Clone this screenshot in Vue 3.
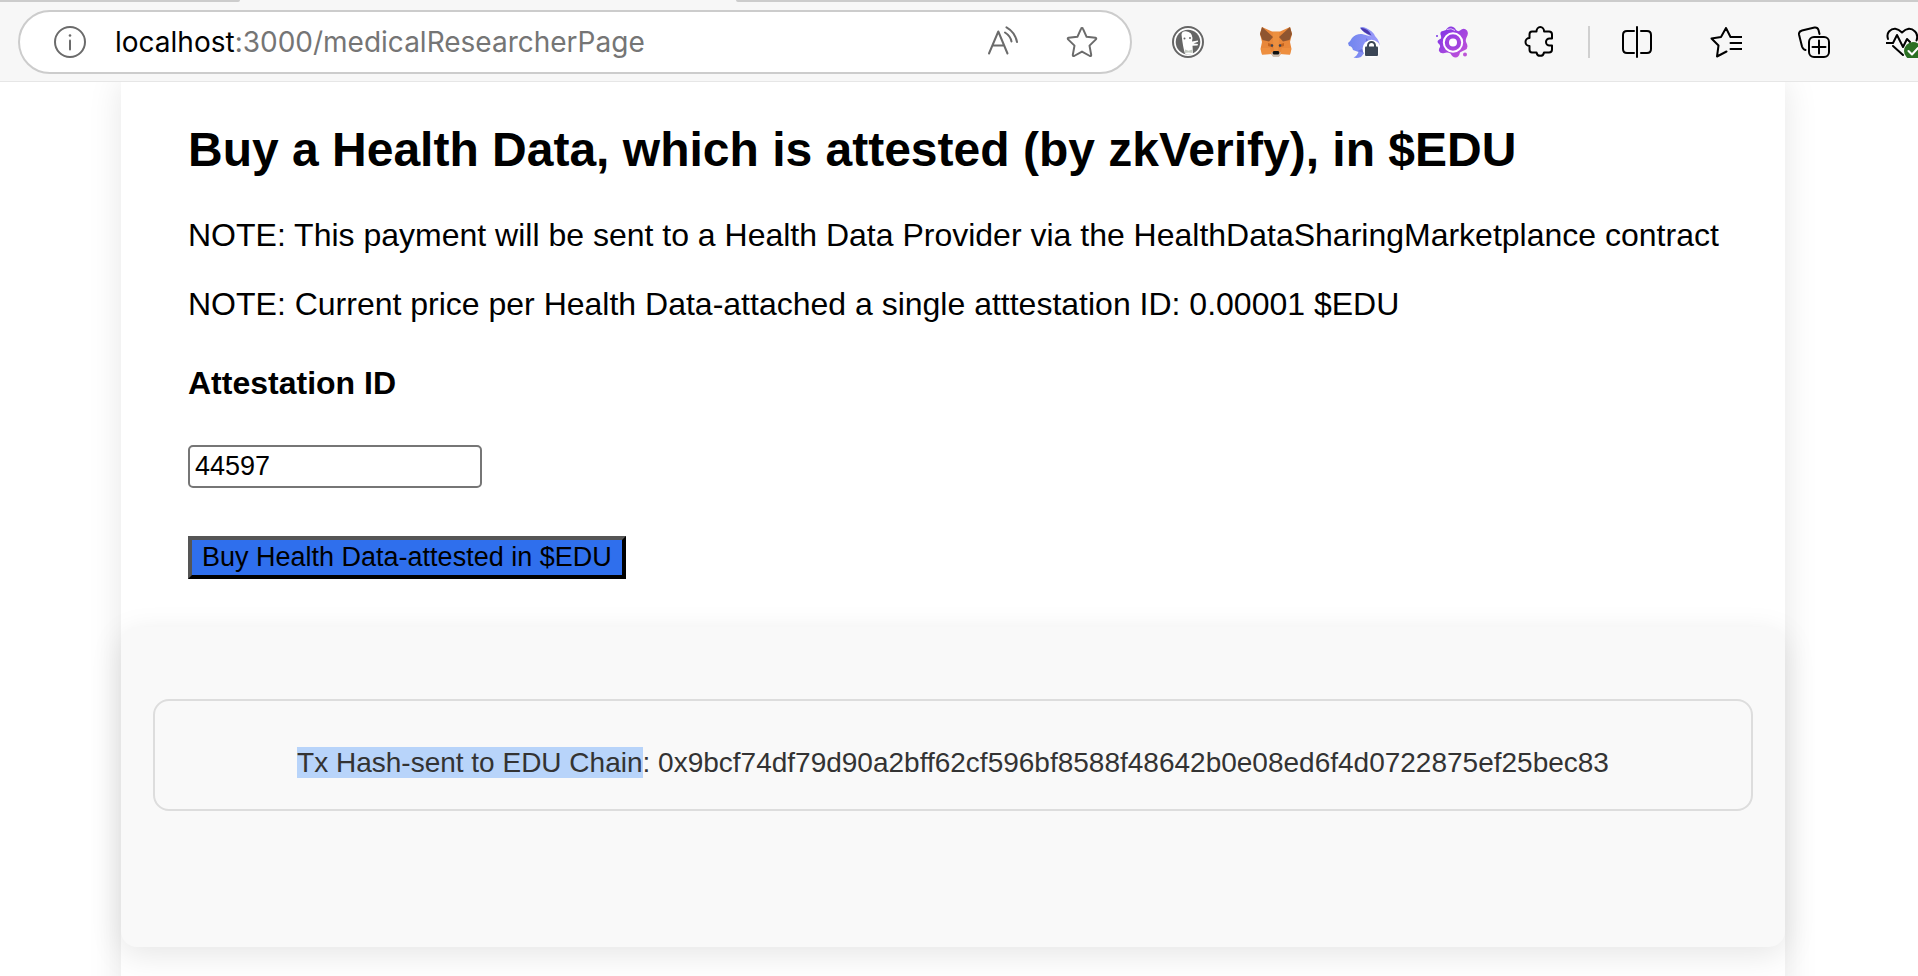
<script setup>
import { ref } from 'vue'

const attestationId = ref('44597')
const txHash = '0x9bcf74df79d90a2bff62cf596bf8588f48642b0e08ed6f4d0722875ef25bec83'
</script>

<template>
  <div class="browser">
    <header class="chrome">
      <div class="tab-strip">
        <span class="tabs-before"></span>
        <span class="tabs-after"></span>
      </div>
      <div class="toolbar">
        <div class="address-bar">
          <button class="icon-button" type="button" aria-label="Site information">
            <svg class="icon grey" viewBox="0 0 32 32">
              <circle cx="16" cy="16" r="15" />
              <path d="M16 14.5v9" />
              <circle cx="16" cy="9.5" r="1.3" class="dot" />
            </svg>
          </button>
          <div class="url" role="textbox" aria-label="Address"><span class="host">localhost</span>:3000/medicalResearcherPage</div>
          <button class="icon-button" type="button" aria-label="Read aloud">
            <svg class="icon grey" viewBox="0 0 32 32">
              <path d="M3 27.500L12.300 5.500L21.500 27.500M6.500 19.500H18" />
              <path d="M19 6.500Q24.500 10 25.500 15.500M20.500 1.300Q29 6 31 16" />
            </svg>
          </button>
          <button class="icon-button" type="button" aria-label="Add to favorites">
            <svg class="icon grey" viewBox="0 0 32 32">
              <path d="M16 2q.7 0 1 .8l3.600 8 8.800 1q1.400.4.500 1.600l-6.400 6.200 1.700 9.300q0 1.500-1.300 1.100L16 25.600 8.100 30q-1.300.4-1.300-1.100l1.700-9.300L2.100 13.400q-.9-1.200.5-1.600l8.800-1 3.600-8q.3-.8 1-.8z" />
            </svg>
          </button>
        </div>

        <div class="extensions">
          <button class="icon-button" type="button" aria-label="DuckDuckGo">
            <svg class="icon" viewBox="0 0 32 32">
              <circle cx="16" cy="16" r="15" fill="#fff" stroke="#666" stroke-width="2" />
              <circle cx="16" cy="16" r="12.300" fill="#666" />
              <path d="M9.500 8.500Q10 5 14 5.300q6 .7 6.500 6.700l-.5 3.500 6-1v1.200l-4.500 1.800 4.500.6-.5 1.400-5 .3.500 8q-3 1.200-8 0-2-6-3.500-19.300z" fill="#fff" />
              <circle cx="12.500" cy="12.500" r="1" fill="#666" />
              <circle cx="18" cy="12" r="1" fill="#666" />
              <path d="M13 23.500l3.500 1.200 4-1.200v3.500l-4-.5-3.500.5z" fill="#c6ccc3" />
            </svg>
          </button>
          <button class="icon-button" type="button" aria-label="MetaMask">
            <svg class="icon" viewBox="0 0 32 32">
              <path d="M2 1l10 4.500h8L30 1l2 7-2 8 1.500 7-1.500 5.500-9-.5-2.500 2.500h-5L11 28l-9 .5L.5 23 2 16 0 8z" fill="#e8873a" />
              <path d="M2 1l11 10-4 4.500-6.500-1.500L0 8zM30 1L19 11l4 4.500 6.500-1.500L32 8z" fill="#8f5530" />
              <path d="M13 6h6v8l-1 11h-4l-1-11z" fill="#ec9040" />
              <path d="M8 17l5 1.500v3L8 20zM24 17l-5 1.500v3l5-1.500z" fill="#c4641f" />
              <circle cx="12" cy="19.500" r="1.200" fill="#394556" />
              <circle cx="20" cy="19.500" r="1.200" fill="#394556" />
              <path d="M1 22h9l2 6-10 .5zM31 22h-9l-2 6 10 .5z" fill="#ee8f3f" />
              <path d="M11 26.500h10L19 31h-6z" fill="#cfc0b2" />
              <path d="M13.500 25h5l1 2-1 1.500h-5l-1-1.500z" fill="#111" />
            </svg>
          </button>
          <button class="icon-button" type="button" aria-label="Rabby Wallet">
            <svg class="icon" viewBox="0 0 32 32">
              <defs>
                <linearGradient id="rabby" x1="0" x2="1">
                  <stop offset="0" stop-color="#7085ee" />
                  <stop offset="1" stop-color="#9d9afa" />
                </linearGradient>
              </defs>
              <path d="M12 2q1.500-2 6 0 7 3 9 8 5 5 5 12l-4 4H17l-4 5q-4 1.500-7.500.5 3-1 5-5.500L5 24q-1-4-4-4l-1-3q2-1 4-5 4-4.500 10-4l9 2.500Q15 6.500 12 2z" fill="url(#rabby)" />
              <path d="M12.500 1.800q8 .5 11 7.700Q15 7 12.500 1.800z" fill="#4a38ac" />
              <path d="M10 25q9-3 8-13l6 6-8 9z" fill="#4c50c0" opacity=".45" />
              <circle cx="23.500" cy="22.800" r="9" fill="#fff" />
              <path d="M20 21v-1.500a3.500 3.500 0 0 1 7 0V21" fill="none" stroke="#3b4656" stroke-width="2" />
              <rect x="17" y="20.500" width="13" height="9.500" rx="1" fill="#3b4656" />
            </svg>
          </button>
          <button class="icon-button" type="button" aria-label="Wallet extension">
            <svg class="icon" viewBox="0 0 32 32">
              <defs>
                <linearGradient id="splash" x1="0" y1="0" x2="1" y2="1">
                  <stop offset="0" stop-color="#7a32e6" />
                  <stop offset="1" stop-color="#c856d8" />
                </linearGradient>
              </defs>
              <path d="M10 4Q12 0 15.500.500 19 1 20 4q2 2 4 .5Q28 1 31 4.500q2 3-.5 7-1.500 3 0 5.500 2.500 5-1.500 7-3 1-5 2.500-1 5-4.500 5-3 0-5-4-3-1.500-6-.5-4 1-5.500-2-.5-2 1-4 .5-2-1.500-3.500Q1 16 2 14.500q1-1 3-2 .5-2-.5-4Q4 5 7 5z" fill="url(#splash)" />
              <circle cx="17" cy="16.500" r="9.200" fill="none" stroke="#fff" stroke-width="2" />
              <path d="M10 13q4-4 10-1 5 4 3.500 9-5 3-10-1-3-3-3.500-7z" fill="#a043df" />
              <circle cx="17" cy="16.500" r="4" fill="#fff" />
              <path d="M11 3.500q4-2 8 1" fill="none" stroke="#fff" opacity=".7" />
              <circle cx="29" cy="28.500" r="2" fill="#bd55d7" />
              <circle cx="1" cy="10" r="1" fill="#7a35e6" />
            </svg>
          </button>
          <button class="icon-button" type="button" aria-label="Extensions">
            <svg class="icon black" viewBox="0 0 32 32">
              <path d="M8 5.500h4.500a3.800 4.500 0 0 1 7.600 0H25q3 0 3 3v4h-2.500a3.500 3.500 0 0 0 0 7H28v4q0 3-3 3h-5a3.800 4 0 0 1-7.500 0H8q-2.500 0-2.500-3v-3.500a4 4 0 0 1 0-8V8.500q0-3 2.500-3z" />
            </svg>
          </button>
          <span class="divider"></span>
          <button class="icon-button" type="button" aria-label="Split screen">
            <svg class="icon black" viewBox="0 0 32 32">
              <path d="M12 5H5Q1 5 1 9v14q0 4 4 4h7M19 5h6q4 0 4 4v14q0 4-4 4h-6M15 1v30" />
            </svg>
          </button>
          <button class="icon-button" type="button" aria-label="Favorites">
            <svg class="icon black" viewBox="0 0 32 32">
              <path d="M32 11H20.500L16 2l-5 9-9.500 1.500 7 7L7 30.500l9.500-5M20.500 17H32M20.500 23H32" />
            </svg>
          </button>
          <button class="icon-button" type="button" aria-label="Collections">
            <svg class="icon black" viewBox="0 0 32 32">
              <path d="M21.500 8l-1-4q-1-3-4-2.500L4 4.500Q.5 5.500 1 8.500l3 12q1 3 3.500 3.500" />
              <rect x="11" y="11" width="20" height="20" rx="5" />
              <path d="M21 14.500v13M14.500 21h13" />
            </svg>
          </button>
          <button class="icon-button" type="button" aria-label="Browser essentials">
            <svg class="icon black" viewBox="0 0 32 32">
              <path d="M2 13Q.5 8.500 3 5.500q6-6 13 1 7-7 13-1 3.500 3.500 1.500 9M0 17h7l4-8 6 12 4-8 3 3M7 20l10 9" />
              <circle cx="27" cy="25" r="9" fill="#2b7023" stroke="none" />
              <path d="M22.500 25l3.500 3.500 6-6.500" class="tick" />
            </svg>
          </button>
        </div>
      </div>
    </header>

    <main class="viewport">
      <div class="page">
        <section class="purchase">
          <h2>Buy a Health Data, which is attested (by zkVerify), in $EDU</h2>
          <p>NOTE: This payment will be sent to a Health Data Provider via the HealthDataSharingMarketplance contract</p>
          <p>NOTE: Current price per Health Data-attached a single atttestation ID: 0.00001 $EDU</p>
          <h3><label for="attestation-id">Attestation ID</label></h3>
          <input id="attestation-id" v-model="attestationId" class="id-input" type="text" />
          <button class="buy" type="button">Buy Health Data-attested in $EDU</button>
        </section>
        <section class="result">
          <p class="tx"><mark>Tx Hash-sent to EDU Chain</mark>: {{ txHash }}</p>
        </section>
      </div>
    </main>
  </div>
</template>

<style>
body {
  background: #fff;
}
</style>

<style scoped>
.browser {
  display: flex;
  flex-direction: column;
  height: 100vh;
  font-family: "Liberation Sans", Arial, sans-serif;
  color: #000;
}

.chrome {
  position: relative;
  z-index: 1;
  flex: none;
  background: #f7f7f7;
  border-bottom: 1px solid #e6e6e6;
}

.tab-strip {
  display: flex;
  justify-content: space-between;
  gap: 496px;
  height: 2px;
}

.tabs-before {
  width: 240px;
  background: #ccc;
  border-bottom-right-radius: 2px;
}

.tabs-after {
  flex: 1;
  background: #ccc;
  border-bottom-left-radius: 2px;
}

.toolbar {
  display: flex;
  align-items: center;
  gap: 40px;
  padding: 8px 0 7px 18px;
}

.address-bar {
  display: flex;
  flex: 1;
  align-items: center;
  box-sizing: border-box;
  height: 64px;
  padding: 0 32px 0 34px;
  background: #fff;
  border: 2px solid #ccc;
  border-radius: 32px;
}

.url {
  flex: 1;
  margin-left: 29px;
  font-family: Inter, sans-serif;
  font-size: 28px;
  line-height: 36px;
  white-space: nowrap;
  color: #757575;
}

.host {
  color: #000;
}

.address-bar .icon-button:last-child {
  margin-left: 48px;
}

.icon-button {
  display: block;
  flex: none;
  width: 32px;
  height: 32px;
  padding: 0;
  background: none;
  border: 0;
}

.icon {
  display: block;
  width: 32px;
  height: 32px;
}

.grey,
.black {
  fill: none;
  stroke-width: 2;
  stroke-linecap: round;
  stroke-linejoin: round;
}

.grey {
  stroke: #6b6b6b;
}

.black {
  stroke: #000;
}

.dot {
  fill: #6b6b6b;
  stroke: none;
}

.tick {
  stroke: #fff;
}

.extensions {
  display: flex;
  flex: none;
  align-items: center;
  gap: 56px;
}

.divider {
  width: 2px;
  height: 32px;
  margin: 0 -24px;
  background: #d0d0d0;
}

.viewport {
  flex: 1;
  min-height: 0;
  overflow: auto;
  scrollbar-width: none;
}

.page {
  margin: 0 133px 0 121px;
  padding-bottom: 64px;
  background: #fff;
  box-shadow: 0 0 32px rgba(0, 0, 0, 0.1);
}

.purchase {
  display: flex;
  flex-direction: column;
  align-items: flex-start;
  padding: 40px 64px 48px 67px;
}

h2 {
  margin: 0 0 39px;
  font-size: 48px;
  line-height: 56px;
}

.purchase p {
  margin: 0 0 32px;
  font-size: 32px;
  line-height: 37px;
}

h3 {
  margin: 10px 0 43px;
  font-size: 32px;
  line-height: 37px;
}

.id-input,
.buy {
  box-sizing: border-box;
  height: 43px;
  font-family: inherit;
  font-size: 27px;
  line-height: 31px;
  color: #000;
}

.id-input {
  width: 294px;
  padding: 2px 5px;
  background: #fff;
  border: 2px solid #767676;
  border-radius: 5px;
}

.buy {
  margin-top: 48px;
  padding: 0 10px;
  background: #2f6fed;
  border: 4px solid;
  border-color: #555 #000 #000 #555;
}

.result {
  padding: 72px 32px 136px;
  background: #f9f9f9;
  border-radius: 16px;
  box-shadow: 0 8px 32px rgba(0, 0, 0, 0.1);
}

.tx {
  margin: 0;
  padding: 46px 30px 30px;
  border: 2px solid #ddd;
  border-radius: 16px;
  font-size: 28px;
  line-height: 32px;
  text-align: center;
  color: #333;
}

mark {
  background: #b8d4fa;
  color: inherit;
}
</style>
